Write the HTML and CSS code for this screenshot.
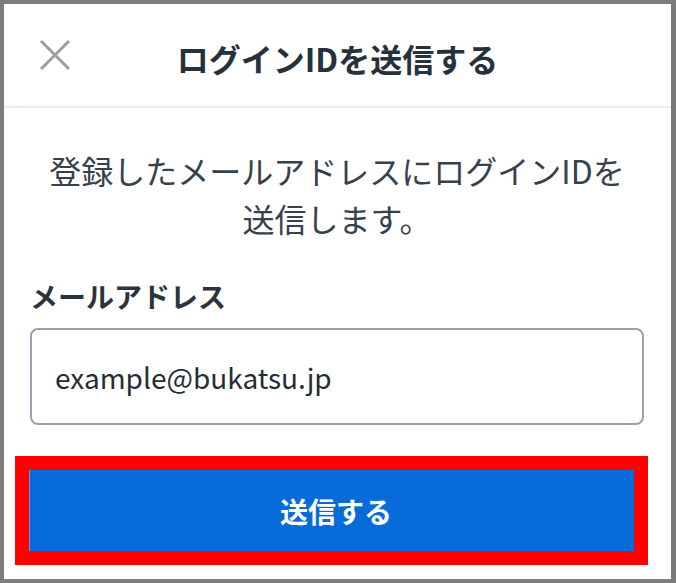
FILE: index.html
```html
<!DOCTYPE html>
<html lang="ja">
<head>
<meta charset="utf-8">
<link rel="stylesheet" href="styles.css">
</head>
<body>
<div class="frame">
  <header class="header">
    <button class="close" aria-label="閉じる">
      <svg width="32" height="32" viewBox="0 0 32 32"><path d="M2 2 L30 30 M30 2 L2 30" stroke="#9d9d9d" stroke-width="3" fill="none"/></svg>
    </button>
    <h1 class="title">ログインIDを送信する</h1>
    <span></span>
  </header>
  <main class="content">
    <p class="lead">登録したメールアドレスにログインIDを<br>送信します。</p>
    <label class="label" for="email">メールアドレス</label>
    <div class="input"><span class="value">example@bukatsu.jp</span></div>
    <div class="highlight">
      <button class="submit">送信する</button>
    </div>
  </main>
</div>
</body>
</html>
```
FILE: styles.css
```css
html, body {
  margin: 0;
  padding: 0;
  background: #ffffff;
}
body {
  font-family: "Noto Sans CJK JP", "Noto Sans", sans-serif;
}
.frame {
  width: 676px;
  height: 583px;
  box-sizing: border-box;
  border: 4px solid #7d7d7d;
  border-right-width: 5px;
  border-right-color: #7a7a7a;
  background: #ffffff;
  display: flex;
  flex-direction: column;
}
.header {
  height: 102px;
  border-bottom: 2px solid #e9eef3;
  display: grid;
  grid-template-columns: 1fr auto 1fr;
  align-items: center;
}
.close {
  justify-self: start;
  margin-left: 35px;
  padding: 0;
  border: 0;
  background: none;
  width: 32px;
  height: 32px;
  display: block;
}
.close svg { display: block; }
.title {
  margin: 6px 0 0;
  font-size: 32px;
  font-weight: 700;
  color: #27313c;
  line-height: 1.2;
}
.content {
  padding: 0 27px 0 26px;
  display: flex;
  flex-direction: column;
}
.lead {
  margin: 38px 0 0;
  text-align: center;
  font-size: 32px;
  line-height: 48px;
  color: #37414c;
}
.label {
  margin-top: 34px;
  font-size: 28px;
  line-height: 40px;
  font-weight: 700;
  color: #2b333d;
}
.input {
  margin-top: 12px;
  height: 97px;
  box-sizing: border-box;
  border: 2px solid #98a2ae;
  border-radius: 8px;
  display: flex;
  align-items: center;
  padding: 0 23px;
}
.value {
  font-size: 28px;
  color: #252c34;
}
.highlight {
  margin: 31px 0 0 -15px;
  width: 633px;
  box-sizing: border-box;
  border: 14px solid #ff0000;
}
.submit {
  display: block;
  width: 100%;
  height: 81px;
  border: 0;
  border-left: 1px solid #5aa0ee;
  background: #076cd9;
  color: #ffffff;
  font-family: "Noto Sans CJK JP", "Noto Sans", sans-serif;
  font-size: 28px;
  font-weight: 700;
  padding: 0 0 0 8px;
}
```
